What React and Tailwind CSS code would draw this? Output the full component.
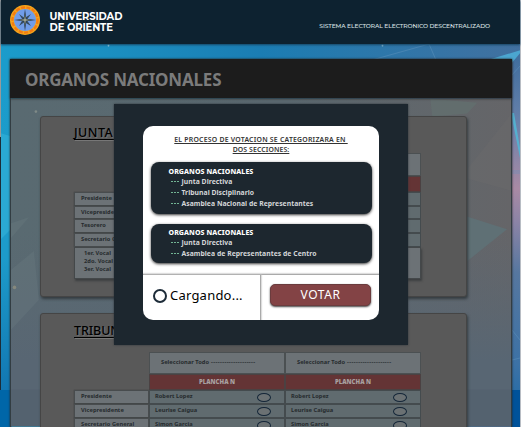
const names = ["Robert Lopez", "Leurise Caigua", "Simon Garcia"];
const titleFont = "font-['Noto_Sans','Open_Sans',sans-serif]";

function Backdrop() {
  return (
    <svg className="absolute inset-0 h-[427px] w-[521px]" viewBox="0 0 521 427" aria-hidden="true">
      <defs>
        <linearGradient id="sky" x1="0" y1="0" x2="1" y2="0">
          <stop offset="0" stopColor="#1b9ccb" />
          <stop offset="0.5" stopColor="#1b7db3" />
          <stop offset="1" stopColor="#42709f" />
        </linearGradient>
        <linearGradient id="edge" x1="0" y1="0" x2="0" y2="1">
          <stop offset="0" stopColor="#426f9e" />
          <stop offset="0.16" stopColor="#6580aa" />
          <stop offset="0.35" stopColor="#a98aa4" />
          <stop offset="0.44" stopColor="#8c84a6" />
          <stop offset="0.58" stopColor="#56779f" />
          <stop offset="0.83" stopColor="#3c72a6" />
          <stop offset="1" stopColor="#1768a6" />
        </linearGradient>
        <linearGradient id="left" x1="0" y1="0" x2="0" y2="1">
          <stop offset="0" stopColor="#1b9ccb" />
          <stop offset="0.6" stopColor="#1d9bca" />
          <stop offset="1" stopColor="#1277b2" />
        </linearGradient>
      </defs>
      <rect width="521" height="427" fill="url(#sky)" />
      <rect y="60" width="40" height="330" fill="url(#left)" />
      <rect x="511" y="60" width="10" height="367" fill="url(#edge)" />
      <path d="M0 133 10 136V230L0 240Z" fill="#36b5da" opacity=".55" />
      <path d="M491 59 521 50V52L511 64Z" fill="#4ba6d0" />
      <path d="M512 113 514 113 520 148V158L512 118Z" fill="#55b0d0" />
      <path d="M372 60 429 44 436 60M512 75 520 66M512 171h8M512 173h8M512 330l8 10M512 360l8-2" fill="none" stroke="#5e93bd" strokeWidth=".5" />
      <rect y="390" width="12" height="37" fill="#0066a8" />
      <rect x="511" y="390" width="10" height="37" fill="#00529a" />
      <rect width="1" height="137" fill="#999" />
      <rect y="137" width="1" height="253" fill="#1c2c37" />
      <rect x="520" width="1" height="427" fill="#b8bdc4" />
      <circle cx="108.500" cy="45.500" r=".9" fill="#a5dcec" />
      <circle cx="382.500" cy="45.500" r=".9" fill="#8fc3dd" />
    </svg>
  );
}

function Facets() {
  return (
    <svg className="absolute inset-0 h-full w-full" viewBox="10 98 502 329" aria-hidden="true">
      <defs>
        <linearGradient id="veil" x1="0" y1="0" x2="1" y2="0">
          <stop offset="0" stopColor="#596a71" />
          <stop offset=".55" stopColor="#5b6970" />
          <stop offset="1" stopColor="#656568" />
        </linearGradient>
        <linearGradient id="veilLow" x1="0" y1="0" x2="0" y2="1">
          <stop offset=".4" stopColor="#5b6772" stopOpacity="0" />
          <stop offset=".8" stopColor="#586673" />
        </linearGradient>
      </defs>
      <rect x="10" y="98" width="502" height="329" fill="url(#veil)" />
      <rect x="10" y="98" width="502" height="329" fill="url(#veilLow)" />
      <path d="M10 223 28 217 10 238ZM10 270 33 251 38 300 10 330Z" fill="#6a7b82" opacity=".35" />
      <path d="M431 98 478 102 468 113 433 116Z" fill="#63706f" opacity=".7" />
      <path d="M467 170 511 115V190L467 178Z" fill="#69696b" opacity=".6" />
      <path d="M467 216 508 229 467 262Z" fill="#5f7075" />
      <path d="M10 390h502v37H10Z" fill="#4f5e6b" opacity=".5" />
      <circle cx="35" cy="111" r="1.300" fill="#7f8a87" />
      <circle cx="13.500" cy="287.500" r="1.800" fill="#85887d" />
    </svg>
  );
}

function Compass() {
  return (
    <svg className="h-[30px] w-[30px]" viewBox="0 0 30 30" aria-hidden="true">
      <circle cx="15" cy="15" r="15" fill="#f5a51b" />
      <circle cx="15" cy="15" r="12.600" fill="none" stroke="#f37a12" strokeWidth="2.200" strokeDasharray="4 1.500" />
      <circle cx="15" cy="15" r="11" fill="#719de9" />
      <path d="m9 9 5 8 7 4-5-7Zm12 0-8 5-4 7 7-5Z" fill="#344b62" />
      <path d="m15 4 1.300 9.700L26 15l-9.700 1.300L15 26l-1.300-9.700L4 15l9.700-1.300Z" fill="#263744" />
      <path d="m15 9 .7 5.300L21 15l-5.300.7L15 21l-.7-5.300L9 15l5.300-.7Z" fill="#c8c9ad" opacity=".8" />
    </svg>
  );
}

function Label({ children }) {
  return <div className="flex items-center whitespace-nowrap border border-[#484c4e] bg-[#6c7276] pl-[6px] shadow-[0_0_1px_#333]">{children}</div>;
}

function Plank({ children }) {
  return <div className="flex items-center justify-center border border-[#4b4142] bg-[#643435] text-[6px] font-black tracking-[0.02px] text-[#a8a0a0]">{children}</div>;
}

function SelectAll() {
  return (
    <div className="flex items-center border border-[#4b5052] bg-[#6c7276] pl-[11px]">
      <span className="whitespace-pre">Seleccionar Todo</span>
      <span className="ml-[2px] tracking-[0.400px]">--------------------</span>
    </div>
  );
}

function Candidate({ name }) {
  return (
    <div className="flex items-center justify-between border border-[#444b4e] bg-[#606b6f] pl-[5px] pr-[13px]">
      {name}
      <span className="h-[9px] w-[14px] rounded-[50%] border border-[#142638] bg-[#6b7173]" />
    </div>
  );
}

function BoardCard({ title, first }) {
  return (
    <section className={(first ? "h-[181px]" : "h-[150px]") + " w-[427px] shrink-0 rounded-[3px] border border-[#454545] bg-[#595959] shadow-[1px_2px_3px_#333b3f]"}>
      <h2 className={(first ? "mt-[7px] h-[29px] tracking-[0.45px]" : "mt-[8px] h-[28px] tracking-[-0.1px]") + " ml-[33px] whitespace-nowrap text-[12.500px] leading-[17px] font-medium text-black underline decoration-1 underline-offset-[2px] [text-shadow:1px_1px_1px_#777]"}>{title}</h2>
      <div className={(first ? "grid-rows-[23px_16px_14px_13px_14px_14px_32px]" : "mt-[2px] grid-rows-[22px_16px_14px_14px_14px]") + " ml-[33px] grid w-[347px] grid-cols-[75px_136px_136px] text-[5.700px] font-bold leading-none tracking-[0.04px] text-[#252a2d]"}>
        <div className="row-span-2" />
        <SelectAll />
        <SelectAll />
        <Plank>PLANCHA N</Plank>
        <Plank>PLANCHA N</Plank>
        <Label>Presidente</Label>
        <Candidate name={names[0]} />
        <Candidate name={names[0]} />
        <Label>Vicepresidente</Label>
        <Candidate name={names[1]} />
        <Candidate name={names[1]} />
        {first && <><Label>Tesorero</Label><Candidate name={names[1]} /><Candidate name={names[1]} /></>}
        <Label>Secretario General</Label>
        <Candidate name={names[2]} />
        <Candidate name={names[2]} />
        {first && (
          <>
            <div className="border border-[#44484a] bg-[#6c7276] pl-[9px] pt-[1px] leading-[8px] shadow-[1px_2px_2px_#3c3f41]">
              <p>1er. Vocal</p><p>2do. Vocal</p><p>3er. Vocal</p>
            </div>
            <div className="border border-[#44484a] bg-[#6c7276]" />
            <div className="border border-[#44484a] bg-[#6c7276] shadow-[1px_2px_2px_#3c3f41]" />
          </>
        )}
      </div>
    </section>
  );
}

function Section({ items, className }) {
  return (
    <div className={"rounded-[8px] bg-[#1d272f] pl-[18px] shadow-[0_1px_3px_#333] " + className}>
      <h3 className="text-[7px] leading-[9px] font-extrabold tracking-[0.08px] text-white">ORGANOS NACIONALES</h3>
      <ul className="ml-[2px] text-[6.800px] font-bold tracking-[0.04px] text-[#d4d6d8]">
        {items.map((item) => (
          <li key={item} className="flex h-[11px] items-center leading-[9px]">
            <span className="mr-[2px] flex w-[9px] gap-px">
              <i className="h-[1.500px] w-[2px] bg-[#72b594]" /><i className="h-[1.500px] w-[2px] bg-[#72b594]" /><i className="h-[1.500px] w-[2px] bg-[#72b594]" />
            </span>
            {item}
          </li>
        ))}
      </ul>
    </div>
  );
}

function Dialog() {
  return (
    <div className="absolute left-[114px] top-[104px] h-[241px] w-[294px] bg-[#1d272f] px-[29px] pt-[22px] shadow-[0_0_2px_#2e3438]">
      <div className="flex h-[194px] w-[236px] flex-col overflow-hidden rounded-[10px] bg-white">
        <div className="h-[148px] px-[7.500px] pt-[9px]">
          <p className="h-[27px] text-center text-[6.900px] leading-[10px] font-semibold tracking-[0.1px] text-[#333] underline decoration-1 underline-offset-[1px]">
            <span className="whitespace-pre tracking-[0.220px]">EL PROCESO DE VOTACION SE CATEGORIZARA EN </span><br />DOS SECCIONES:
          </p>
          <Section className="h-[52px] pt-[5px]" items={["Junta Directiva", "Tribunal Disciplinario", "Asamblea Nacional de Representantes"]} />
          <Section className="mt-[10px] h-[39px] pt-[4px]" items={["Junta Directiva", "Asamblea de Representantes de Centro"]} />
        </div>
        <div className="flex h-[46px] border-t border-[#aaa] shadow-[0_-1px_1px_#ddd]">
          <div className="flex w-[118px] items-center border-r border-[#aaa] pb-[3px] pl-[10px] shadow-[1px_0_1px_#ddd]">
            <span className="mr-[3px] h-[14px] w-[14px] rounded-full border-2 border-[#1d2c39]" />
            <span className="font-['Noto_Sans',sans-serif] text-[13px] font-normal tracking-[0.22px] text-black">Cargando...</span>
          </div>
          <div className="flex-1 pl-[8.500px] pt-[9px]">
            <button className="flex h-[22px] w-[101px] items-center justify-center rounded-[5px] border border-[#6b3c3e] bg-[#834345] pl-[1px] text-[12px] leading-[18px] tracking-[0.6px] text-white shadow-[0_1px_2px_#444]">VOTAR</button>
          </div>
        </div>
      </div>
    </div>
  );
}

export default function App() {
  return (
    <div className={"relative h-[427px] w-[521px] overflow-hidden " + titleFont}>
      <Backdrop />
      <header className="relative ml-px flex h-[44px] w-[519px] items-start justify-between bg-[#0d2230] pl-[9px] pr-[30px] pt-[5px] text-white shadow-[0_1px_2px_#174563]">
        <div className="flex">
          <Compass />
          <div className="ml-[9.500px] mt-[6px] font-['Montserrat','Inter',sans-serif] text-[10px] leading-[11px] font-bold tracking-[-0.13px]">
            <p>UNIVERSIDAD</p><p>DE ORIENTE</p>
          </div>
        </div>
        <p className="mt-[17px] whitespace-nowrap font-['Montserrat','Inter',sans-serif] text-[6px] leading-[9px] font-medium tracking-[-0.09px] text-[#dce2e6]">SISTEMA ELECTORAL ELECTRONICO DESCENTRALIZADO</p>
      </header>
      <main className="relative ml-[10px] mt-[15px] flex h-[368px] w-[502px] flex-col shadow-[0_0_2px_#222]">
        <h1 className="relative z-10 h-[39px] shrink-0 bg-[#1c1c1c] pl-[15px] text-[17px] leading-[42px] font-bold tracking-[-0.2px] text-[#7b7b7b] shadow-[0_1px_2px_#333]">ORGANOS NACIONALES</h1>
        <div className="relative h-[329px] overflow-hidden border-x border-[#333d42]">
          <Facets />
          <div className="relative ml-[29px] mt-[18px] flex flex-col gap-[16px]">
            <BoardCard title="JUNTA DIRECTIVA" first />
            <BoardCard title="TRIBUNAL DISCIPLINARIO" />
          </div>
        </div>
      </main>
      <Dialog />
    </div>
  );
}
